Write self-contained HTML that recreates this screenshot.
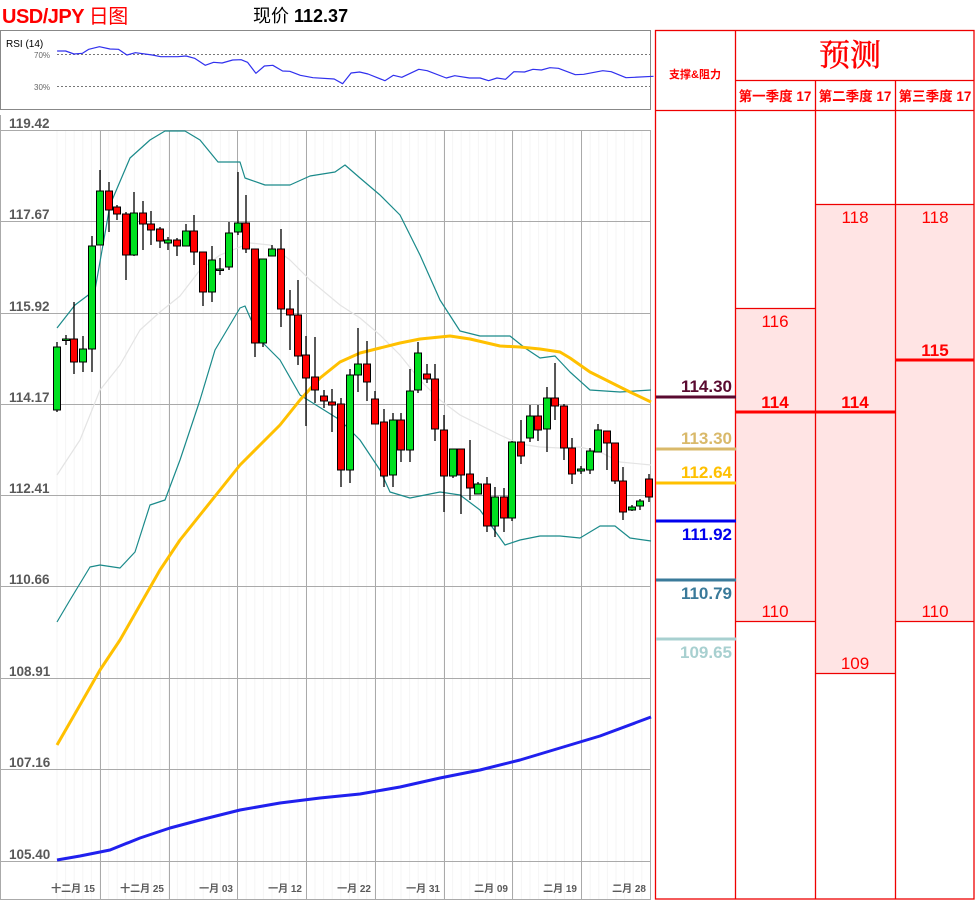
<!DOCTYPE html>
<html><head><meta charset="utf-8"><style>
body{margin:0;width:975px;height:900px;background:#fff;overflow:hidden;position:relative;font-family:"Liberation Sans","Noto Sans CJK SC",sans-serif}
.a{position:absolute;white-space:nowrap}
</style></head><body>
<div class="a" style="left:2px;top:0px;font-size:20px;font-weight:bold;color:#f00;letter-spacing:-0.5px">USD/JPY <span style="font-weight:normal">日图</span></div>
<div class="a" style="left:253px;top:2px;font-size:18px;color:#000">现价 <b>112.37</b></div>
<svg class="a" style="left:0;top:0" width="975" height="900" id="s">
<rect x="0.5" y="30.5" width="650" height="79" fill="none" stroke="#888"/>
<text x="6" y="47" font-size="10" font-family="Liberation Sans">RSI (14)</text>
<text x="34" y="58" font-size="8" fill="#666" font-family="Liberation Sans">70%</text>
<text x="34" y="90" font-size="8" fill="#666" font-family="Liberation Sans">30%</text>
<line x1="57" y1="54.5" x2="650" y2="54.5" stroke="#777" stroke-dasharray="2,2"/>
<line x1="57" y1="86.5" x2="650" y2="86.5" stroke="#777" stroke-dasharray="2,2"/>
<path d="M0.5 115V899.5H650.5V130" fill="none" stroke="#aaa"/>
<g id="grid" stroke="#aaa" stroke-width="1"></g>
<g id="lines" fill="none"></g>
<g id="c"></g>
<g font-size="13.5" font-weight="bold" fill="#595959" font-family="Liberation Sans" id="yl"></g>
<g font-size="10" font-weight="bold" fill="#595959" text-anchor="end" font-family="Liberation Sans,Noto Sans CJK SC" id="xl"></g>
<rect x="735" y="308" width="80" height="313" fill="#ffe4e4"/>
<rect x="815" y="204" width="80" height="469" fill="#ffe4e4"/>
<rect x="895" y="204" width="79" height="417" fill="#ffe4e4"/>
<g stroke="#e00" stroke-width="1.3" fill="none">
<rect x="655.5" y="30.5" width="318.5" height="868.5"/>
<line x1="735.5" y1="30" x2="735.5" y2="899"/>
<line x1="815.5" y1="80" x2="815.5" y2="899"/>
<line x1="895.5" y1="80" x2="895.5" y2="899"/>
<line x1="735" y1="80.5" x2="974" y2="80.5"/>
<line x1="655" y1="110.5" x2="974" y2="110.5"/>
<line x1="735" y1="308.5" x2="815" y2="308.5"/>
<line x1="735" y1="621.5" x2="815" y2="621.5"/>
<line x1="815" y1="204.5" x2="974" y2="204.5"/>
<line x1="815" y1="673.5" x2="895" y2="673.5"/>
<line x1="895" y1="621.5" x2="974" y2="621.5"/>
</g>
<g stroke="#f00" stroke-width="3"><line x1="735" y1="412" x2="895" y2="412"/><line x1="895" y1="360" x2="974" y2="360"/></g>
<g fill="#f00" font-family="Liberation Sans,Noto Sans CJK SC" text-anchor="middle">
<text x="850" y="66" font-size="31" font-family="Noto Serif CJK SC,serif" stroke="#f00" stroke-width="0.5">预测</text>
<text x="695" y="78" font-size="11" font-weight="bold">支撑&amp;阻力</text>
<text x="775" y="101" font-size="13.5" font-weight="bold">第一季度 17</text>
<text x="855" y="101" font-size="13.5" font-weight="bold">第二季度 17</text>
<text x="935" y="101" font-size="13.5" font-weight="bold">第三季度 17</text>
<g font-size="17"><text x="775" y="327">116</text><text x="775" y="617">110</text><text x="855" y="223">118</text><text x="855" y="669">109</text><text x="935" y="223">118</text><text x="935" y="617">110</text></g>
<g font-size="17" font-weight="bold"><text x="775" y="408">114</text><text x="855" y="408">114</text><text x="935" y="356">115</text></g>
</g>
<g stroke-width="3">
<line x1="656" y1="397" x2="736" y2="397" stroke="#5a0a30"/>
<line x1="656" y1="449" x2="736" y2="449" stroke="#d9b96a"/>
<line x1="656" y1="483" x2="736" y2="483" stroke="#ffc000"/>
<line x1="656" y1="521" x2="736" y2="521" stroke="#0000ee"/>
<line x1="656" y1="580" x2="736" y2="580" stroke="#3a7a9a"/>
<line x1="656" y1="639" x2="736" y2="639" stroke="#a8d0d0"/>
</g>
<g font-size="17" font-weight="bold" text-anchor="end" font-family="Liberation Sans">
<text x="732" y="392" fill="#5a0a30">114.30</text>
<text x="732" y="444" fill="#d9b96a">113.30</text>
<text x="732" y="478" fill="#ffc000">112.64</text>
<text x="732" y="540" fill="#0000ee">111.92</text>
<text x="732" y="599" fill="#3a7a9a">110.79</text>
<text x="732" y="658" fill="#a8d0d0">109.65</text>
</g>
</svg>
<script>
var NS="http://www.w3.org/2000/svg";
function el(p,t,a){var e=document.createElementNS(NS,t);for(var k in a)e.setAttribute(k,a[k]);document.getElementById(p).appendChild(e);return e;}
for(var x=57;x<650;x+=8.6){el("grid","line",{x1:x,y1:130,x2:x,y2:899,stroke:"#f5f5f5"});}
[100,169,237,306,375,444,512,581].forEach(function(x){el("grid","line",{x1:x+.5,y1:130,x2:x+.5,y2:899});});
var gy=[130,221,313,404,495,586,678,769,861],gl=["119.42","117.67","115.92","114.17","112.41","110.66","108.91","107.16","105.40"];
gy.forEach(function(y,i){el("grid","line",{x1:0,y1:y+.5,x2:650,y2:y+.5});var t=el("yl","text",{x:9,y:y-2});t.textContent=gl[i];});
var xl=[[95,"十二月 15"],[164,"十二月 25"],[233,"一月 03"],[302,"一月 12"],[371,"一月 22"],[440,"一月 31"],[508,"二月 09"],[577,"二月 19"],[646,"二月 28"]];
xl.forEach(function(a){var t=el("xl","text",{x:a[0],y:892});t.textContent=a[1];});
function pl(pts,c,w){el("lines","polyline",{points:pts,stroke:c,"stroke-width":w,"stroke-linejoin":"round"});}
pl("57,475 80,440 100,390 120,365 140,330 160,312 180,296 200,270 220,255 250,243 270,245 290,260 310,280 340,305 360,318 380,335 400,355 420,380 440,400 460,415 480,425 500,435 520,444 540,447 560,448 580,447 600,452 620,462 651,465","#e4e4e4",1.2);
pl("57,328 75,305 95,290 110,205 130,158 150,140 165,131 185,131 200,140 218,162 240,162 245,178 265,185 290,185 310,176 335,172 345,165 360,178 380,195 400,215 420,255 440,300 460,331 480,336 510,336 525,348 540,358 555,356 570,372 590,390 620,392 651,390","#1a8a8a",1.2);
pl("57,622 70,600 90,567 100,565 120,568 135,552 150,505 165,500 180,460 200,400 215,350 240,308 245,306 260,340 280,360 300,395 340,420 360,440 380,470 390,492 410,498 440,492 460,495 480,510 505,545 520,540 540,536 560,536 580,538 600,526 615,526 630,538 651,541","#1a8a8a",1.2);
pl("57,745 80,705 100,670 120,640 140,605 160,570 180,540 200,515 220,490 240,465 260,445 280,425 300,400 320,378 340,362 360,353 380,348 400,343 420,339 450,336 470,339 500,346 520,347 540,349 560,352 570,358 590,372 610,382 630,392 651,402","#ffc000",3);
pl("57,860 80,856 110,850 140,838 170,828 200,820 240,810 280,803 320,798 360,794 400,787 440,778 480,770 520,760 560,748 600,736 651,717","#2020ee",3);
var r=[];[[135,153],[155,153],[175,162],[195,160],[210,148],[235,140],[260,147],[280,148],[300,165],[320,158],[360,165],[380,170],[420,170],[440,168],[460,175],[485,196],[505,187],[525,189],[550,180],[570,179],[585,187],[605,220],[625,198],[645,196],[668,213],[685,214],[710,226],[740,233],[790,237],[810,251],[830,219],[850,216],[870,222],[910,242],[930,226],[950,232],[990,208],[1010,212],[1055,234],[1075,227],[1110,234],[1135,234],[1155,242],[1175,234],[1195,238],[1215,215],[1240,216],[1260,208],[1280,210],[1300,203],[1320,205],[1360,224],[1380,223],[1425,212],[1445,215],[1480,233],[1500,232],[1545,229]].forEach(function(p){r.push((p[0]*0.423).toFixed(1)+","+(p[1]/3).toFixed(1));});
pl(r.join(" "),"#3030ee",1.2);
var C=[[57,342,347,410,412,"g"],[66,335,339,339,345,"d"],[74,302,339,362,374,"r"],[83,336,349,362,372,"g"],[92,236,246,349,372,"g"],[100,170,191,245,245,"g"],[109,182,191,210,232,"r"],[117,205,207,214,220,"r"],[126,212,214,255,280,"r"],[134,192,213,255,256,"g"],[143,201,213,224,250,"r"],[151,211,224,230,245,"r"],[160,227,229,241,248,"r"],[168,237,240,243,250,"g"],[177,238,240,246,256,"r"],[186,224,231,246,246,"g"],[194,215,231,252,265,"r"],[203,252,252,292,306,"r"],[212,246,260,292,302,"g"],[220,258,269,269,275,"d"],[229,222,233,267,270,"g"],[238,172,223,232,235,"g"],[246,195,223,249,253,"r"],[255,249,249,343,357,"r"],[263,259,259,343,347,"g"],[272,245,249,256,256,"g"],[281,229,249,309,327,"r"],[290,290,309,315,350,"r"],[298,280,315,356,365,"r"],[306,336,355,378,426,"r"],[315,337,377,390,403,"r"],[324,390,396,401,408,"r"],[332,389,402,405,432,"r"],[341,398,404,470,487,"r"],[350,369,375,470,483,"g"],[358,328,364,375,392,"g"],[367,341,364,382,401,"r"],[375,391,399,424,424,"r"],[384,409,422,476,487,"r"],[393,413,420,475,487,"g"],[401,413,420,450,462,"r"],[410,369,391,450,462,"g"],[418,342,353,390,393,"g"],[427,364,374,379,383,"r"],[435,364,379,429,441,"r"],[444,415,430,476,512,"r"],[453,449,449,476,478,"g"],[461,449,449,475,514,"r"],[470,440,474,488,500,"r"],[478,482,484,494,494,"g"],[487,477,484,526,532,"r"],[495,487,497,526,537,"g"],[504,488,497,518,532,"r"],[512,441,442,518,521,"g"],[521,420,442,456,464,"r"],[530,405,416,438,442,"g"],[538,405,416,430,441,"r"],[547,387,398,429,452,"g"],[555,363,398,406,420,"r"],[564,404,406,448,460,"r"],[572,438,448,474,484,"r"],[581,466,469,471,474,"g"],[590,448,451,470,474,"g"],[598,424,430,452,452,"g"],[607,431,431,443,470,"r"],[615,443,443,481,484,"r"],[623,467,481,512,520,"r"],[632,505,507,510,511,"g"],[640,499,501,506,510,"g"],[649,474,479,497,502,"r"]];
C.forEach(function(c){el("c","line",{x1:c[0],y1:c[1],x2:c[0],y2:c[4],stroke:"#000","stroke-width":1.3});
var h=Math.max(c[3]-c[2],1.5);el("c","rect",{x:c[0]-3.5,y:c[2],width:7,height:h,fill:c[5]=="r"?"#ff0000":"#00e020",stroke:"#000","stroke-width":1});});
</script>
</body></html>
